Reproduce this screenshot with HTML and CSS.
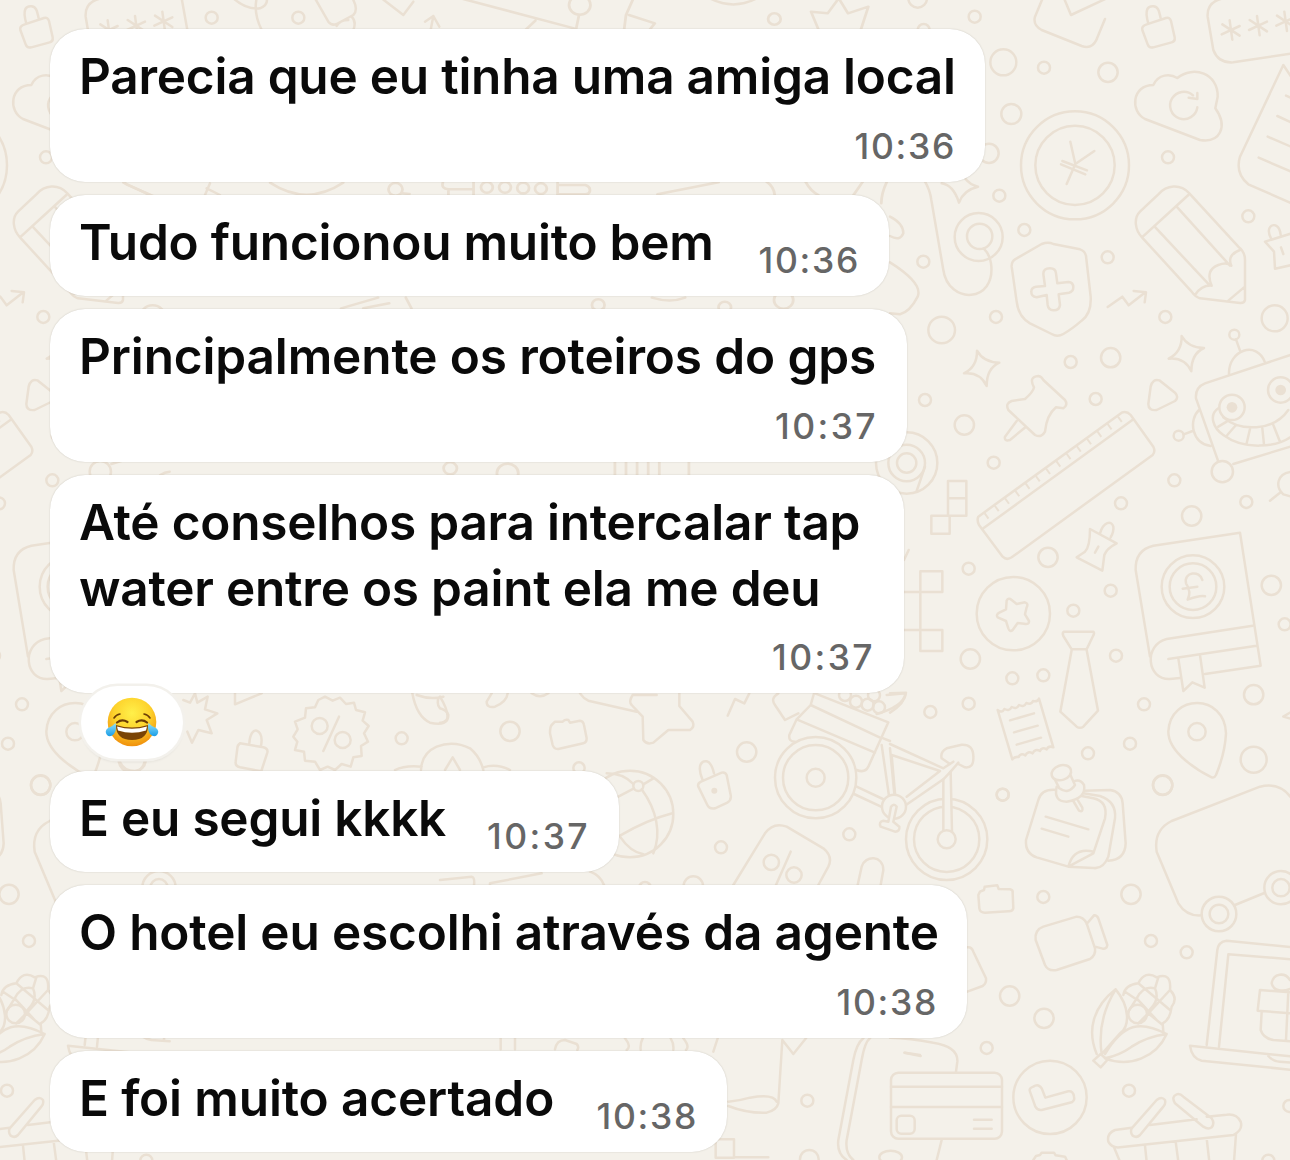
FILE: index.html
```
<!DOCTYPE html>
<html lang="pt-BR">
<head>
    <meta charset="UTF-8">
    <meta name="viewport" content="width=device-width, initial-scale=1.0">
    <title>Conversa</title>
    <link rel="stylesheet" href="styles.css">
</head>
<body>
    <svg class="wallpaper" viewBox="0 0 1290 1160" aria-hidden="true">
        <defs>
            <g id="asterisk"><path d="M-4-29L4 29M-26-17L26 17M-28 13L26-12"/></g>
            <path id="sparkle" d="M261 152Q280 187 328 188Q290 205 290 258Q270 215 222 220Q262 200 261 152z"/>
        </defs>
        <g id="doodles">
            <!-- lock, cloud, coin, pencil, shield -->
            <g transform="translate(890 0) scale(.33333)">
                <circle cx="83" cy="-5" r="28"/><circle cx="254" cy="50" r="18"/><circle cx="101" cy="90" r="18"/><circle cx="340" cy="187" r="39"/><circle cx="462" cy="203" r="18"/><circle cx="654" cy="217" r="29"/><circle cx="364" cy="342" r="30"/><circle cx="297" cy="460" r="29"/><circle cx="834" cy="472" r="18"/><circle cx="328" cy="587" r="18"/><circle cx="403" cy="690" r="18"/><circle cx="100" cy="785" r="18"/><circle cx="653" cy="772" r="18"/><circle cx="1075" cy="649" r="18"/><circle cx="318" cy="951" r="18"/><circle cx="826" cy="951" r="18"/><circle cx="1154" cy="955" r="39"/>
                <path d="M460-10L435 50Q428 75 455 90L575 138Q605 148 618 122L645 57M520-10L543 45L650-5"/>
                <path d="M770 73L828 54Q840 51 843 63L854 112Q856 124 845 127L790 142Q777 145 773 133L757 90Q754 78 770 73zM775 71C762 25 775 18 790 19C808 20 808 40 813 59"/>
                <path d="M1210 160L1030 187Q985 190 970 150L953 50Q950 5 1000-5"/>
                <use href="#asterisk" x="1023" y="90"/><use href="#asterisk" x="1105" y="77"/><use href="#asterisk" x="1187" y="64"/>
                <path d="M765 357C720 335 725 255 790 255C805 222 840 220 862 234C910 195 985 220 983 290L976 325C1015 380 990 430 930 420zM922 322A41 41 0 1 1 909 286M896 293L922 297V279"/>
                <path d="M1210 240L1180 195L1050 470Q1035 520 1075 553L1210 612M1188 287L1210 297M1162 348L1210 370M1133 410L1210 443M1106 473L1210 518"/>
                <circle cx="555" cy="496" r="162"/><circle cx="555" cy="496" r="119"/>
                <path d="M541 425L556 492L530 552M556 492L613 453M517 483L591 511M513 493L586 523"/>
                <path d="M155 550Q190 555 207 608Q220 570 264 560Q240 555 225 535"/>
                <path d="M105 545Q120 570 124 600L160 810C175 915 320 910 303 790Q300 765 281 745"/><circle cx="266" cy="711" r="72"/><circle cx="269" cy="709" r="38"/>
                <path d="M375 778L455 732Q475 724 490 732L570 748Q585 753 588 768L602 890Q605 940 575 962Q545 988 520 1002Q502 1012 485 1002L420 970Q385 950 380 905L365 800Q364 785 375 778z"/>
                <path d="M465 858L460 822Q460 805 480 805Q497 805 498 820L502 850L535 846Q550 847 550 862Q550 875 537 878L506 883L510 915Q508 932 490 931Q475 930 473 915L470 885L440 892Q423 890 424 875Q424 862 438 860z"/>
                <path d="M653 921L697 890L716 916L766 877M731 873L768 877L764 907"/>
                <path d="M756 712C735 690 730 655 750 635L805 583C830 555 870 550 898 580L1045 740Q1065 755 1065 780V900Q1063 910 1050 909L930 895Q915 890 905 875zM756 712L895 585M860 620L1020 797M794 680L960 857M915 885Q935 855 965 857Q945 810 985 795Q1010 785 1024 797Q1010 765 1050 750M1015 902L1062 862"/>
                <path d="M1205 700L1125 725L1152 755L1155 806L1205 795M1143 715C1125 680 1150 670 1160 678Q1170 685 1172 705M1173 742L1180 762"/>
                <path d="M0 650Q40 670 40 700Q30 725 0 708M0 787Q100 850 83 890Q60 935 30 943L0 940"/>
            </g>
            <!-- pin, ruler, robot -->
            <g transform="translate(890 300) scale(.33333)">
                <circle cx="155" cy="90" r="40"/><circle cx="662" cy="173" r="29"/><circle cx="542" cy="186" r="18"/><circle cx="105" cy="300" r="18"/><circle cx="617" cy="297" r="18"/><circle cx="223" cy="375" r="29"/><circle cx="311" cy="488" r="18"/><circle cx="853" cy="541" r="18"/><circle cx="693" cy="610" r="18"/><circle cx="905" cy="648" r="29"/><circle cx="1069" cy="606" r="18"/><circle cx="474" cy="772" r="29"/><circle cx="236" cy="806" r="18"/><circle cx="662" cy="872" r="18"/><circle cx="1144" cy="856" r="29"/>
                <use href="#sparkle"/><use href="#sparkle" x="614" y="-44"/>
                <path d="M432 262Q415 230 445 228Q455 230 460 240L525 300Q535 315 520 325L498 322Q470 345 465 395Q455 415 435 405L355 330Q345 310 365 303L405 297Q430 275 432 262zM380 363L345 410Q342 425 360 420L408 380"/>
                <path d="M782 260Q788 235 808 241L855 278Q868 292 855 303L800 330Q775 333 775 312z"/>
                <path d="M265 650L695 338Q710 332 722 345L790 440Q797 455 788 465L365 772Q350 782 338 770L267 675Q260 660 265 650zM280 685L727 360"/>
                <path class="ticks" d="M692 356L285 651"/>
                <circle cx="50" cy="489" r="92"/><circle cx="50" cy="489" r="55"/><circle cx="50" cy="489" r="29"/><path d="M105 500L80 573"/>
                <path d="M174 543h55v104h-55zM174 595h55M124 647h55v54h-55zM42 780L56 750"/>
                <path d="M600 687L680 730Q650 745 643 765L637 812L560 772L585 755Q600 740 600 687zM630 700C640 665 665 660 670 680Q672 695 662 712M625 740L615 758"/>
                <path d="M1210 162L945 250Q915 262 918 295L985 485M1030 492L1210 437M927 330C895 360 905 430 962 438M881 403L908 393M1038 118L1050 152M1017 222C1015 150 1100 120 1125 187"/>
                <circle cx="997" cy="515" r="32"/><circle cx="866" cy="407" r="15"/><circle cx="1033" cy="104" r="15"/>
                <path d="M985 325C955 345 970 385 1000 405C1060 450 1160 445 1210 405M1000 352C1050 395 1150 395 1195 330M985 380L1010 365M1012 405L1038 375M1070 430L1080 387M1122 433L1117 385M1170 425L1150 375"/>
                <circle class="bg" cx="1026" cy="322" r="38"/><circle class="bg" cx="1172" cy="270" r="38"/><circle class="dot" cx="1026" cy="322" r="16"/><circle class="dot" cx="1172" cy="270" r="16"/>
                <path d="M1205 515C1160 520 1155 560 1180 583L1205 590M1170 578L1140 602"/>
            </g>
            <!-- book, tie, receipt, map pin -->
            <g transform="translate(890 520) scale(.33333)">
                <circle cx="550" cy="272" r="18"/><circle cx="678" cy="407" r="18"/><circle cx="241" cy="417" r="29"/><circle cx="367" cy="475" r="18"/><circle cx="460" cy="466" r="18"/><circle cx="236" cy="551" r="18"/><circle cx="121" cy="576" r="18"/><circle cx="762" cy="553" r="18"/><circle cx="1091" cy="524" r="29"/><circle cx="1184" cy="313" r="18"/><circle cx="720" cy="671" r="18"/><circle cx="594" cy="700" r="18"/><circle cx="1091" cy="719" r="39"/><circle cx="818" cy="796" r="29"/><circle cx="338" cy="824" r="18"/>
                <path d="M91 154h66v62h-66zM91 330h66v63h-66zM42 216H91V330H42"/>
                <circle cx="370" cy="281" r="110"/>
                <path d="M350 242Q355 232 365 240L380 252L405 247Q416 250 410 262L405 283L417 303Q418 315 402 311L383 309L368 330Q360 338 355 325L348 303L323 292Q317 284 328 278L348 268z"/>
                <path d="M780 410L737 150Q735 90 790 77L1050 38L1112 437L945 462M1088 317L830 357C760 375 770 480 840 477L870 474M1100 377L835 417M865 415L880 513L907 487L944 503L930 405"/>
                <circle cx="909" cy="200" r="94"/><circle cx="909" cy="200" r="70"/>
                <path d="M937 180C930 150 880 155 888 190Q905 215 893 239Q930 225 945 229M878 206L922 200"/>
                <path d="M522 335H610Q615 340 608 350L590 388H545L520 348Q516 338 522 335zM545 390L511 575L560 620Q570 627 580 620L624 572L590 390"/>
                <path d="M367 718L323 570q14 10 20-3q15 8 22-6q15 8 22-6q15 8 22-6q15 6 20-6q14 3 18-7L490 682q-14-6-20 6q-15-8-20 5q-15-8-22 7q-15-8-22 6q-15-8-20 5q-12-2-19 7M360 601L432 580M372 637L443 617M380 674L453 653"/>
                <path d="M965 772C930 755 835 700 835 635C840 520 1005 520 1008 640Q1005 700 978 765Q973 775 965 772z"/><circle cx="921" cy="635" r="26"/>
                <path d="M0 520L48 518Q45 550 0 578M1205 575L1180 590L1205 597"/>
            </g>
            <!-- bicycle, notes, van, corn, laptop, card, basket -->
            <g transform="translate(890 740) scale(.33333)">
                <circle cx="170" cy="298" r="122"/><circle cx="170" cy="298" r="98"/><path class="bg" d="M160 275V118L182 95L186 275z"/><circle class="bg" cx="170" cy="298" r="27"/>
                <path d="M155 55Q150 35 170 25L215 14Q250 12 250 50Q252 85 225 82L205 72M155 55L180 72M0 12L160 85L190 65M5 45L150 93L50 170M5 45L15 160M160 118L48 195M205 68L180 97"/>
                <circle cx="338" cy="164" r="18"/><circle cx="818" cy="135" r="29"/><circle cx="460" cy="471" r="18"/><circle cx="723" cy="463" r="29"/><circle cx="783" cy="603" r="18"/><circle cx="890" cy="637" r="18"/><circle cx="359" cy="768" r="29"/><circle cx="462" cy="835" r="29"/><circle cx="290" cy="924" r="18"/><circle cx="717" cy="1052" r="18"/><circle cx="1198" cy="1098" r="18"/>
                <path d="M500 150Q455 145 445 180L408 300Q405 340 440 352L535 380L610 340L645 235Q655 185 610 175L575 168M580 152L660 150Q695 155 698 190L707 310Q705 360 655 362M580 160L630 168Q680 185 675 235L655 350Q640 388 610 384L535 380Q550 320 612 335M467 230L595 268M455 266L535 290"/>
                <path class="bg" d="M550 183L567 212Q580 218 577 203L562 178M500 140Q490 185 530 185Q590 175 582 135Q570 115 550 125M493 115L508 145Q535 165 555 135L540 102"/><ellipse class="bg" cx="514" cy="98" rx="30" ry="22" transform="rotate(-18 514 98)"/>
                <path d="M1205 175Q1170 125 1110 140L845 243Q790 270 800 335L865 490Q890 530 935 526M1035 495L1123 459"/>
                <circle cx="987" cy="522" r="52"/><circle cx="987" cy="522" r="28"/><circle cx="1173" cy="443" r="50"/><circle cx="1173" cy="443" r="26"/>
                <path d="M270 455L282 450L284 440L322 436L326 447L360 448Q370 450 368 460L370 505Q368 515 355 514L285 518Q270 518 268 505L265 465z"/>
                <path d="M460 560L560 530Q580 530 590 550L615 625Q618 645 600 657L500 690Q475 695 465 675L437 600Q433 570 460 560zM590 552L612 526Q620 525 625 535L652 615Q650 628 638 626L615 620"/>
                <path d="M232 622Q245 620 250 635L288 715Q290 730 278 738L232 755"/>
                <path d="M677 748C610 800 590 870 620 942M677 748C720 800 720 860 690 880L635 942Q620 840 677 748M645 942C700 850 750 840 830 882C800 950 720 985 645 955Q690 945 725 920Q770 890 830 882M632 942L652 960L632 982L610 962z"/>
                <path d="M700 765Q705 735 745 730Q765 690 800 712Q845 695 840 750Q865 775 845 800Q840 840 818 850L820 875M705 755L742 780M745 730L840 810M715 815L740 775Q760 735 795 745L805 712M745 850L775 820L840 750M775 820L818 855M795 745Q810 780 780 808M740 775L800 840"/>
                <circle cx="743" cy="822" r="28"/>
                <path d="M1210 622L1010 602Q985 605 982 630L950 915M1205 658L1015 643L987 920M1210 950L900 917Q905 955 935 962L1210 990M1135 948Q1150 965 1170 965L1205 968"/>
                <path d="M1205 757L1110 750L1103 812L1205 820M1115 815L1112 870Q1120 895 1150 900L1205 904M1195 755L1188 900M1200 747C1180 755 1150 755 1145 730C1150 700 1185 695 1200 720"/>
                <path d="M0 893Q60 895 130 908Q205 920 202 965L198 995M43 938L92 948M155 1200L140 1260"/>
                <rect x="3" y="998" width="333" height="198" rx="22"/><rect x="20" y="1127" width="54" height="54" rx="14"/><path d="M3 1040H336M3 1101H336M252 1139H305M252 1166H305"/>
                <circle cx="480" cy="1072" r="110"/>
                <path d="M420 1055Q415 1045 430 1040Q445 1030 455 1045L466 1073L535 1054Q550 1052 552 1070Q555 1082 545 1087L455 1110Q443 1112 436 1100z"/>
                <path d="M430 1260L438 1248L450 1245L455 1238H492L497 1246L525 1250L530 1260"/>
                <path d="M725 1165L800 1080Q815 1068 825 1080Q828 1092 820 1100L750 1185Q740 1195 728 1187Q720 1178 725 1165zM855 1090Q843 1070 860 1063Q870 1060 880 1070L965 1135Q975 1150 965 1162Q955 1170 940 1160zM725 1163L675 1170Q650 1180 655 1205Q665 1225 690 1222L1030 1185Q1060 1170 1052 1145Q1040 1120 1010 1124L950 1130M780 1155L920 1138M672 1222L690 1265M765 1217L770 1265M857 1205L865 1265M950 1195L958 1265M1038 1182L1032 1265"/>
                <circle cx="1135" cy="1262" r="18"/>
            </g>
        </g>
        <use href="#doodles" x="-1122"/>
        <g transform="translate(440 670) scale(.33333)">
            <circle cx="210" cy="184" r="29"/><circle cx="920" cy="246" r="29"/><circle cx="417" cy="294" r="17"/><circle cx="843" cy="532" r="18"/><circle cx="1228" cy="493" r="18"/><circle cx="760" cy="648" r="29"/><circle cx="994" cy="577" r="23"/><circle cx="1062" cy="615" r="23"/><circle cx="615" cy="654" r="18"/>
            <path d="M1052 545L1008 645M880 645L975 490Q1000 455 1040 470L1150 535Q1180 560 1165 590L1135 645M1253 645L1265 590C1275 555 1330 555 1330 600L1322 645"/>
            <circle cx="1127" cy="323" r="122"/><circle cx="1127" cy="323" r="98"/><circle cx="1127" cy="323" r="27"/>
            <path d="M1125 70L1345 157L1285 290Q1275 310 1250 300M1112 105L1325 205M1070 148L1305 248M1125 60L1112 105L1070 148L1048 195Q1045 215 1065 215M1015 70Q990 85 1005 105L1035 150L1075 130M1340 75L1397 70Q1390 110 1310 132"/>
            <circle cx="1215" cy="75" r="18"/><circle cx="1248" cy="95" r="18"/><circle cx="1283" cy="104" r="18"/><circle cx="1317" cy="112" r="18"/><circle cx="1302" cy="76" r="18"/>
            <path d="M1330 205L1350 213M1325 225L1347 378M1350 235L1363 372M1250 350L1335 390M1242 372L1328 412"/>
            <circle class="bg" cx="1362" cy="410" r="36"/><path class="bg" d="M1353 410Q1362 398 1370 410L1360 455L1378 470Q1380 485 1365 485L1322 470Q1315 455 1330 452L1345 455z"/>
            <circle cx="570" cy="432" r="130"/><circle cx="595" cy="348" r="15"/>
            <path d="M500 310Q550 310 580 342M605 358C650 420 665 490 640 550M610 343L640 325M535 380L582 355M540 497Q620 450 697 430M540 500Q570 545 610 553"/>
            <path d="M783 335L845 308Q855 305 860 315L872 375Q875 390 862 398L825 415Q808 418 802 405L775 350Q772 340 783 335zM787 328C770 285 785 272 800 274Q815 278 822 310"/><circle class="dot" cx="823" cy="362" r="9"/>
            <path d="M650 75H578Q565 95 575 105L608 140L610 210Q620 225 640 218L685 180L750 180Q765 170 758 155L718 108V70M420 70Q430 85 445 92L590 125M863 137L885 87L913 100L928 70"/>
            <path d="M335 165L345 155L368 155Q375 148 385 150L390 158L420 152Q430 153 432 165L440 205Q440 218 430 220L355 237Q342 238 338 225L330 190Q330 170 335 165zM155 70L140 95Q140 115 165 110Q200 95 203 70M275 70Q300 88 325 70M15 300L38 262L60 300M130 292Q170 280 210 300M0 80Q30 130 20 150Q10 160 0 158"/>
            <path d="M0 630L95 620Q105 622 102 645M305 610L150 640V648M450 605Q480 615 492 645"/>
        </g>
        <g transform="translate(60 670) scale(.33333)">
            <path d="M795 80L818 92L840 83L858 102L882 98L888 120L915 127L908 152L926 168L912 190L924 215L903 228L905 258L880 262L872 290L845 282L825 300L803 290L780 300L765 275L735 272L732 245L705 240L712 215L700 200L713 178L705 155L735 143L738 115L765 112L775 90zM837 140L790 243"/>
            <circle cx="779" cy="168" r="24"/><circle cx="848" cy="210" r="24"/><circle cx="1025" cy="205" r="18"/>
            <path d="M540 220L610 232Q625 236 622 248L605 300M540 220Q532 225 532 235L527 275Q525 288 540 292L600 303M568 220C570 190 580 180 590 182Q610 190 603 228"/>
            <path d="M370 90L390 98L405 70L412 98L443 80L435 118L472 130L440 150L455 190L415 180L396 218L382 185M525 70V103L605 70"/>
            <path d="M1057 70Q1070 140 1110 158Q1165 170 1165 135Q1160 120 1140 115Q1130 105 1135 85M1070 75Q1110 90 1150 80M1083 300Q1085 250 1130 230Q1180 210 1230 235Q1260 260 1270 300M1005 300Q1035 285 1085 290M180 275Q190 303 225 303Q255 298 257 272"/>
        </g>
        <g transform="scale(.33333)">
            <circle cx="635" cy="53" r="18"/><circle cx="895" cy="53" r="18"/>
            <path d="M545-5L562 90M700-5Q740 30 780 25Q805 15 800-5M770-5Q760 40 785 90M945-5L985 65Q995 78 1010 72L1060 45Q1075 30 1060 0M1055 50Q1070 65 1060 90M1010 78Q1020 60 1045 60M1145-5L1210 45L1240 5M1275 65L1300 48L1318 80M1300 48L1292 90"/>
            <path d="M370 548L450 585M630 550L615 585M620 565L660 585M810 548Q920 620 1030 548"/>
        </g>
        <g transform="translate(330 0) scale(.37 .33333)">
            <path d="M360-3L660 85M530 88L555 62M673 45L665 88M820-5L800 45L795 88M808 45L878 70L865 88M1320 88L1300 35L1345 40L1375-5L1400 40L1455 20L1435 88M1030-3Q1090 30 1150-3"/>
            <circle cx="675" cy="15" r="29"/><circle cx="1201" cy="57" r="17"/>
            <path d="M195 580L215 582M305 548Q300 565 320 568H385M388 547V585M320 568V585M615 548V585M615 555H690Q705 560 702 575Q700 583 690 583H615M885 583L1050 547M1180 545Q1200 560 1202 585M1285 545Q1300 575 1320 585M1415 585L1440 545M1505 545Q1490 580 1490 610"/>
            <circle cx="177" cy="568" r="19"/><circle cx="424" cy="562" r="16"/><circle cx="473" cy="562" r="16"/><circle cx="522" cy="564" r="16"/><circle cx="570" cy="566" r="16"/>
            <path d="M870 893Q920 910 960 893M30 925L130 893M90 925L160 910M205 893L220 925"/>
            <circle cx="725" cy="915" r="17"/><circle cx="1067" cy="922" r="17"/><circle cx="1226" cy="900" r="26"/>
            <path d="M770 1385V1425M800 1385V1425M830 1385V1425M860 1385V1425M890 1385V1425M970 1385V1425"/>
            <circle cx="325" cy="1405" r="18"/><circle cx="480" cy="1420" r="29"/>
        </g>
        <g transform="translate(420 870) scale(.33333)">
            <path d="M242 505V538M285 505V538M405 538Q410 510 435 510L470 522Q478 530 472 540M615 505Q635 530 620 540M662 540Q660 520 668 505M760 540Q762 520 752 505M790 505Q810 530 798 540M893 505L880 545"/>
            <path d="M1158 505L1120 552L1087 510L1075 700Q1070 720 1040 728Q980 730 925 708M925 695Q960 692 990 683Q1060 670 1070 695M1455 548L1500 555M887 808h55v55h-55zM942 862H1045"/>
            <path d="M1330 505Q1310 520 1300 570L1255 810Q1250 850 1280 870M1350 505Q1335 515 1325 570L1280 810Q1275 850 1300 870"/>
            <circle cx="1162" cy="692" r="18"/><circle cx="1168" cy="868" r="28"/><ellipse cx="1412" cy="862" rx="34" ry="20"/>
        </g>
    </svg>

    <main class="chat">
        <div class="bubble stacked local">
            <p class="text">Parecia que eu tinha uma amiga local</p>
            <span class="time">10:36</span>
        </div>
        <div class="bubble inline bem">
            <p class="text">Tudo funcionou muito bem</p>
            <span class="time">10:36</span>
        </div>
        <div class="bubble stacked gps">
            <p class="text">Principalmente os roteiros do gps</p>
            <span class="time">10:37</span>
        </div>
        <div class="bubble stacked water">
            <p class="text">Até conselhos para intercalar tap<br>water entre os paint ela me deu</p>
            <span class="time">10:37</span>
            <div class="reaction">
                <svg class="emoji" viewBox="0 0 54 52" role="img" aria-label="Chorando de rir">
                    <defs>
                        <radialGradient id="face" cx=".5" cy=".32" r=".68">
                            <stop offset="0" stop-color="#fff04a"/>
                            <stop offset=".55" stop-color="#fdd22c"/>
                            <stop offset="1" stop-color="#f0900c"/>
                        </radialGradient>
                        <linearGradient id="tear" x1="0" y1="0" x2="0" y2="1">
                            <stop offset="0" stop-color="#8fe0fb"/>
                            <stop offset="1" stop-color="#1a9de6"/>
                        </linearGradient>
                    </defs>
                    <circle cx="27" cy="26" r="24.3" fill="url(#face)"/>
                    <g fill="none" stroke="#6b3d05" stroke-linecap="round">
                        <path d="M9 22Q11 18.500 15 18M45 22Q43 18.500 39 18" stroke-width="1.600"/>
                        <path d="M12 26.500Q17 22.500 22.500 26M31.500 26Q37 22.500 42 26.500" stroke-width="2.200"/>
                    </g>
                    <path d="M11 29Q27 34 43 29Q43 44 27 44Q11 44 11 29z" fill="#7a4406"/>
                    <path d="M12 30.500Q27 35 42 30.500L41 34.500Q27 39 13 34.500z" fill="#fff"/>
                    <path d="M10.500 27Q12 34 9 38Q5 42 2 39Q-1 35 3 32Q8 30 10.500 27zM43.500 27Q42 34 45 38Q49 42 52 39Q55 35 51 32Q46 30 43.500 27z" fill="url(#tear)"/>
                </svg>
            </div>
        </div>
        <div class="bubble inline segui">
            <p class="text">E eu segui kkkk</p>
            <span class="time">10:37</span>
        </div>
        <div class="bubble stacked hotel">
            <p class="text">O hotel eu escolhi através da agente</p>
            <span class="time">10:38</span>
        </div>
        <div class="bubble inline acertado">
            <p class="text">E foi muito acertado</p>
            <span class="time">10:38</span>
        </div>
    </main>
</body>
</html>
```
FILE: styles.css
```
* {
    box-sizing: border-box;
}
body {
    margin: 0;
    width: 1290px;
    height: 1160px;
    overflow: hidden;
    background-color: #f4f1ea;
    font-family: Inter, "Liberation Sans", sans-serif;
    position: relative;
}
/* wallpaper sits behind the bubbles */
.wallpaper {
    position: absolute;
    top: 0;
    left: 0;
    width: 1290px;
    height: 1160px;
    fill: none;
    stroke: #eae0d3;
    stroke-width: 7.5;
    stroke-linecap: round;
    stroke-linejoin: round;
}
.wallpaper .bg {
    fill: #f4f1ea;
}
.wallpaper .dot {
    fill: #eae0d3;
    stroke: none;
}
.wallpaper .ticks {
    stroke-width: 20;
    stroke-linecap: butt;
    stroke-dasharray: 6 32;
}
.chat {
    position: relative;
    display: flex;
    flex-direction: column;
    align-items: flex-start;
    gap: 13px;
    padding: 29px 0 0 50px;
}
.bubble {
    position: relative;
    display: flex;
    padding: 14px 31px 14px 29px;
    border-radius: 35px;
    background-color: #fff;
    box-shadow: 0 0 1.5px rgba(60, 50, 30, 0.25);
    letter-spacing: -0.22px;
}
.stacked {
    flex-direction: column;
    height: 152.5px;
}
.inline {
    justify-content: space-between;
    height: 101.5px;
}
.text {
    margin: 0;
    font-size: 49.5px;
    font-weight: 600;
    line-height: 66px;
    color: #0a0a0a;
    white-space: nowrap;
}
.time {
    align-self: flex-end;
    margin-top: auto;
    font-size: 35.5px;
    font-weight: 550;
    line-height: 42px;
    letter-spacing: 1.7px;
    margin-right: -2px;
    color: #666;
}
.local {
    width: 935px;
}
.bem {
    width: 839px;
}
.gps {
    width: 857px;
    letter-spacing: -0.13px;
}
.water {
    width: 854px;
    height: 218px;
    margin-bottom: 65px;
}
.segui {
    width: 569px;
}
.hotel {
    width: 917px;
    letter-spacing: -0.16px;
}
.acertado {
    width: 677px;
    letter-spacing: -0.13px;
}
/* 7 is narrower than the other digits */
.gps .time,
.water .time,
.segui .time {
    letter-spacing: 2.4px;
}
/* reaction pill overlaps the bottom edge of the bubble */
.reaction {
    position: absolute;
    left: 31px;
    bottom: -66px;
    width: 102px;
    height: 73px;
    display: flex;
    align-items: center;
    justify-content: center;
    border-radius: 37px;
    background-color: #fff;
    box-shadow: 0 0 0 2.5px #f3f1ec, 0 3px 3px rgba(0, 0, 0, 0.08);
}
.emoji {
    width: 54px;
    height: 52px;
}
```
